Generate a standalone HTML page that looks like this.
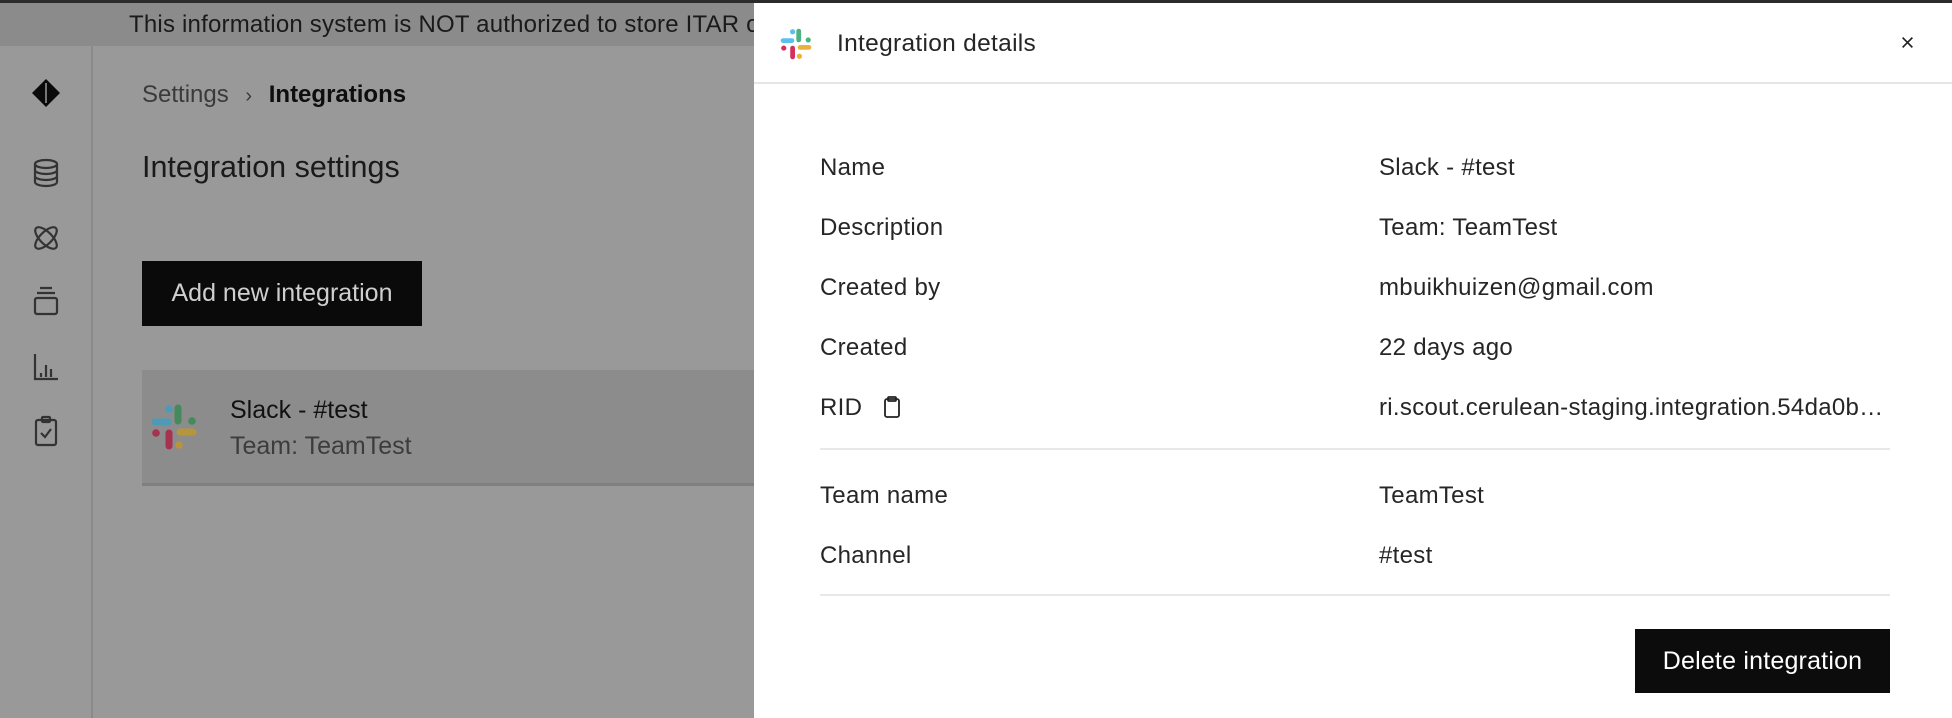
<!DOCTYPE html>
<html><head><meta charset="utf-8"><style>
*{box-sizing:border-box;margin:0;padding:0}
body{width:1952px;height:718px;overflow:hidden;position:relative;font-family:"Liberation Sans",Arial,sans-serif;background:#999}
.topbar{position:absolute;left:0;top:0;width:1952px;height:3px;background:#2b2b2e}
.banner{position:absolute;left:0;top:3px;width:1952px;height:43px;background:#8b8b8b;color:#1a1a1a;font-size:24px;line-height:43px;padding-left:129px;white-space:nowrap;letter-spacing:0.2px}
.side{position:absolute;left:0;top:46px;width:93px;height:672px;background:#999;border-right:2px solid #8a8a8a}
.ic{position:absolute;left:30px;width:32px;height:32px}
.abs{position:absolute;white-space:nowrap}
.panel{position:absolute;left:754px;top:3px;width:1198px;height:715px;background:#fff}
.hdr{position:absolute;left:0;top:0;width:100%;height:81px;border-bottom:2px solid #e6e6e6}
.lbl{position:absolute;left:66px;font-size:24px;color:#262626;letter-spacing:0.3px;white-space:nowrap}
.val{position:absolute;left:625px;font-size:24px;color:#262626;letter-spacing:0.3px;white-space:nowrap}
.sep{position:absolute;left:66px;width:1070px;height:2px;background:#e8e8e8}
</style></head><body>
<div class="topbar"></div>
<div class="banner">This information system is NOT authorized to store ITAR or classified information</div>
<div class="side">
<svg class="ic" style="top:31px" viewBox="0 0 32 32"><path d="M16 2 L30 16 L16 30 L2 16 Z" fill="#0a0a0a"/><path d="M16 6 V26" stroke="#999" stroke-width="1.5"/></svg>
<svg class="ic" style="top:111px" viewBox="0 0 32 32" fill="none" stroke="#333" stroke-width="2.2"><ellipse cx="16" cy="7" rx="11" ry="4"/><path d="M5 7v18c0 2.2 4.9 4 11 4s11-1.8 11-4V7M5 13c0 2.2 4.9 4 11 4s11-1.8 11-4M5 19c0 2.2 4.9 4 11 4s11-1.8 11-4"/></svg>
<svg class="ic" style="top:176px" viewBox="0 0 32 32" fill="none" stroke="#333" stroke-width="2.2"><ellipse cx="16" cy="16" rx="6" ry="14" transform="rotate(45 16 16)"/><ellipse cx="16" cy="16" rx="6" ry="14" transform="rotate(-45 16 16)"/></svg>
<svg class="ic" style="top:239px" viewBox="0 0 32 32" fill="none" stroke="#333" stroke-width="2.2"><path d="M10 3h12M7 8h18"/><rect x="5" y="13" width="22" height="16" rx="2"/></svg>
<svg class="ic" style="top:305px" viewBox="0 0 32 32" fill="none" stroke="#333" stroke-width="2.2"><path d="M5 3v25h23M11 22v4M16 14v12M21 18v8"/></svg>
<svg class="ic" style="top:369px" viewBox="0 0 32 32" fill="none" stroke="#333" stroke-width="2.2"><rect x="6" y="5" width="20" height="25" rx="2"/><rect x="12" y="2" width="8" height="5" rx="1"/><path d="M11 18l4 4 6-8"/></svg>
</div>
<div class="abs" style="left:142px;top:81px;font-size:24px;color:#3a3a3a">Settings <span style="margin:0 10px;font-size:20px">›</span> <b style="color:#0e0e0e">Integrations</b></div>
<div class="abs" style="left:142px;top:150px;font-size:30.5px;color:#1a1a1a">Integration settings</div>
<div class="abs" style="left:142px;top:261px;width:280px;height:65px;background:#0a0a0a;color:#cfcfcf;font-size:25px;line-height:65px;text-align:center">Add new integration</div>
<div class="abs" style="left:142px;top:370px;width:612px;height:116px;background:#8c8c8c;border-bottom:3px solid #7f7f7f"></div>
<svg class="abs" style="left:149px;top:402px" width="50" height="50" viewBox="0 0 50 50" opacity="0.72">
<g stroke-linecap="round" stroke-width="7" fill="none"><path d="M6 20h13" stroke="#36a0c8"/><path d="M29 6v13" stroke="#2a8a4a"/><path d="M31 30h13" stroke="#c79a1e"/><path d="M20 31v13" stroke="#b0103a"/></g>
<circle cx="20" cy="7" r="3.8" fill="#36a0c8"/><circle cx="43" cy="19" r="3.8" fill="#2a8a4a"/><circle cx="30" cy="43" r="3.8" fill="#c79a1e"/><circle cx="7" cy="31" r="3.8" fill="#b0103a"/></svg>
<div class="abs" style="left:230px;top:396px;font-size:25px;color:#111">Slack - #test</div>
<div class="abs" style="left:230px;top:432px;font-size:25px;color:#3c3c3c">Team: TeamTest</div>

<div class="panel">
<div class="hdr">
<svg style="position:absolute;left:25px;top:24px" width="34" height="34" viewBox="0 0 50 50">
<g stroke-linecap="round" stroke-width="7" fill="none"><path d="M6 20h13" stroke="#5bc0eb"/><path d="M29 6v13" stroke="#4ab380"/><path d="M31 30h13" stroke="#ebb13d"/><path d="M20 31v13" stroke="#d72f5c"/></g>
<circle cx="20" cy="7" r="3.8" fill="#5bc0eb"/><circle cx="43" cy="19" r="3.8" fill="#4ab380"/><circle cx="30" cy="43" r="3.8" fill="#ebb13d"/><circle cx="7" cy="31" r="3.8" fill="#d72f5c"/></svg>
<div class="abs" style="left:83px;top:27px;font-size:24.5px;color:#262626;letter-spacing:0.3px">Integration details</div>
<svg style="position:absolute;left:1147px;top:33px" width="13" height="13" viewBox="0 0 16 16"><path d="M2 2l12 12M14 2L2 14" stroke="#222" stroke-width="2"/></svg>
</div>
<div class="lbl" style="top:151px">Name</div><div class="val" style="top:151px">Slack - #test</div>
<div class="lbl" style="top:211px">Description</div><div class="val" style="top:211px">Team: TeamTest</div>
<div class="lbl" style="top:271px">Created by</div><div class="val" style="top:271px">mbuikhuizen@gmail.com</div>
<div class="lbl" style="top:331px">Created</div><div class="val" style="top:331px">22 days ago</div>
<div class="lbl" style="top:391px">RID</div>
<svg style="position:absolute;left:128px;top:392px" width="20" height="24" viewBox="0 0 20 24" fill="none" stroke="#222" stroke-width="1.8"><rect x="3" y="4" width="14" height="18" rx="2"/><rect x="6" y="2" width="8" height="4" rx="1"/></svg>
<div class="val" style="top:391px;width:511px;overflow:hidden;text-overflow:ellipsis">ri.scout.cerulean-staging.integration.54da0b2c-1f3e-4a8b</div>
<div class="sep" style="top:445px"></div>
<div class="lbl" style="top:479px">Team name</div><div class="val" style="top:479px">TeamTest</div>
<div class="lbl" style="top:539px">Channel</div><div class="val" style="top:539px">#test</div>
<div class="sep" style="top:591px"></div>
<div class="abs" style="left:881px;top:626px;width:255px;height:64px;background:#0c0c0c;color:#fff;font-size:25px;line-height:64px;text-align:center;letter-spacing:0.2px">Delete integration</div>
</div>
</body></html>
